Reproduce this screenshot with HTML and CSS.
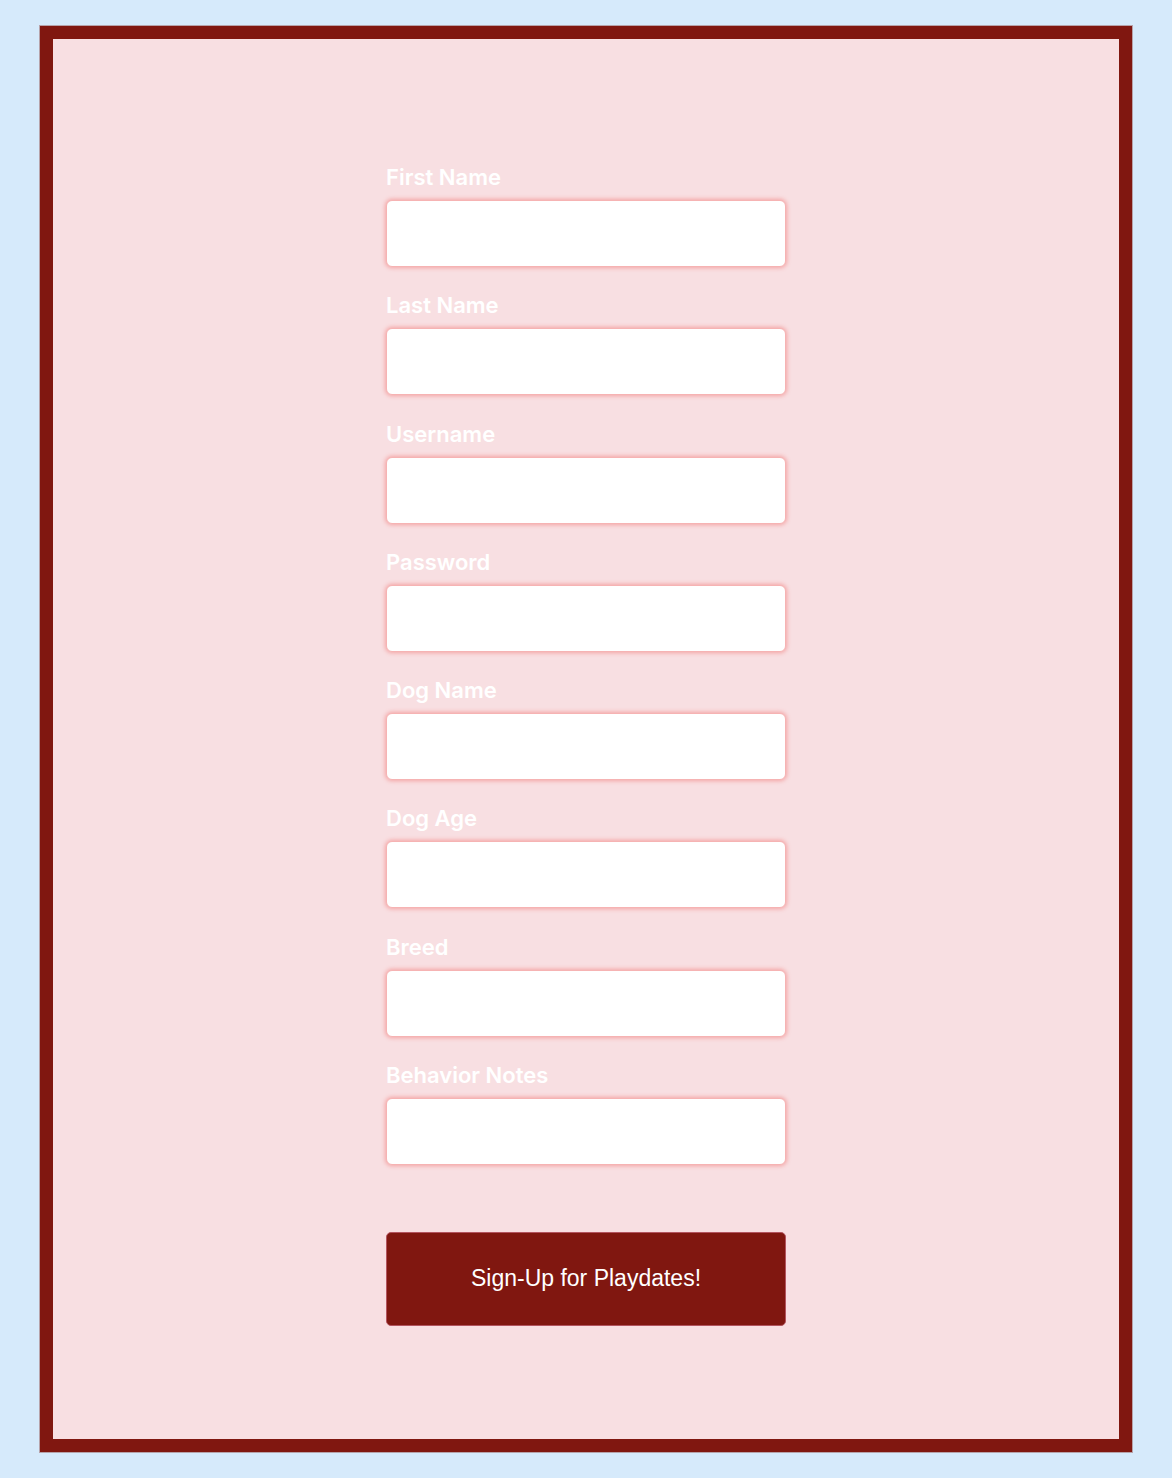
FILE: index.html
```html
<!DOCTYPE html>
<html lang="en">
<head>
<meta charset="utf-8">
<title>Sign-Up for Playdates</title>
<link rel="stylesheet" href="styles.css">
</head>
<body>
<main class="frame">
  <form class="signup">
    <div class="field">
      <label class="label" for="first">First Name</label>
      <input class="input" id="first" type="text">
    </div>
    <div class="field">
      <label class="label" for="last">Last Name</label>
      <input class="input" id="last" type="text">
    </div>
    <div class="field">
      <label class="label" for="user">Username</label>
      <input class="input" id="user" type="text">
    </div>
    <div class="field">
      <label class="label" for="pass">Password</label>
      <input class="input" id="pass" type="password">
    </div>
    <div class="field">
      <label class="label" for="dog">Dog Name</label>
      <input class="input" id="dog" type="text">
    </div>
    <div class="field">
      <label class="label" for="age">Dog Age</label>
      <input class="input" id="age" type="text">
    </div>
    <div class="field">
      <label class="label" for="breed">Breed</label>
      <input class="input" id="breed" type="text">
    </div>
    <div class="field">
      <label class="label" for="notes">Behavior Notes</label>
      <input class="input" id="notes" type="text">
    </div>
    <button class="submit" type="button">Sign-Up for Playdates!</button>
  </form>
</main>
</body>
</html>
```

FILE: styles.css
```css
html, body {
  margin: 0;
  padding: 0;
}

body {
  background: #d6eafb;
  padding: 26px 40px;
  min-height: 1478px;
  box-sizing: border-box;
}

.frame {
  box-sizing: border-box;
  width: 1092px;
  height: 1426px;
  background: #f8dfe2;
  border: 13px solid #801710;
  box-shadow: 0 0 0 1px #b7a3aa;
  margin: 0 auto;
  display: flex;
  justify-content: center;
}

.signup {
  width: 400px;
  padding-top: 125px;
  display: flex;
  flex-direction: column;
}

.field {
  display: flex;
  flex-direction: column;
  margin-bottom: 25.3px;
}

.label {
  font-family: Inter, "Noto Sans", sans-serif;
  font-weight: 600;
  font-size: 22px;
  line-height: 26px;
  color: #ffffff;
  margin-bottom: 10px;
}

.input {
  box-sizing: border-box;
  width: 400px;
  height: 67px;
  background: #ffffff;
  border: 1px solid #f6b3b3;
  border-radius: 6px;
  box-shadow: 0 0 4px 1px #f4a3a3;
  outline: none;
  margin: 0;
}

.submit {
  box-sizing: border-box;
  margin-top: 41.6px;
  width: 400px;
  height: 94px;
  background: #801710;
  border: 1px solid #b3545e;
  border-radius: 5px;
  color: #ffffff;
  font-family: "Liberation Sans", Arial, sans-serif;
  font-size: 23px;
  cursor: pointer;
}
```
